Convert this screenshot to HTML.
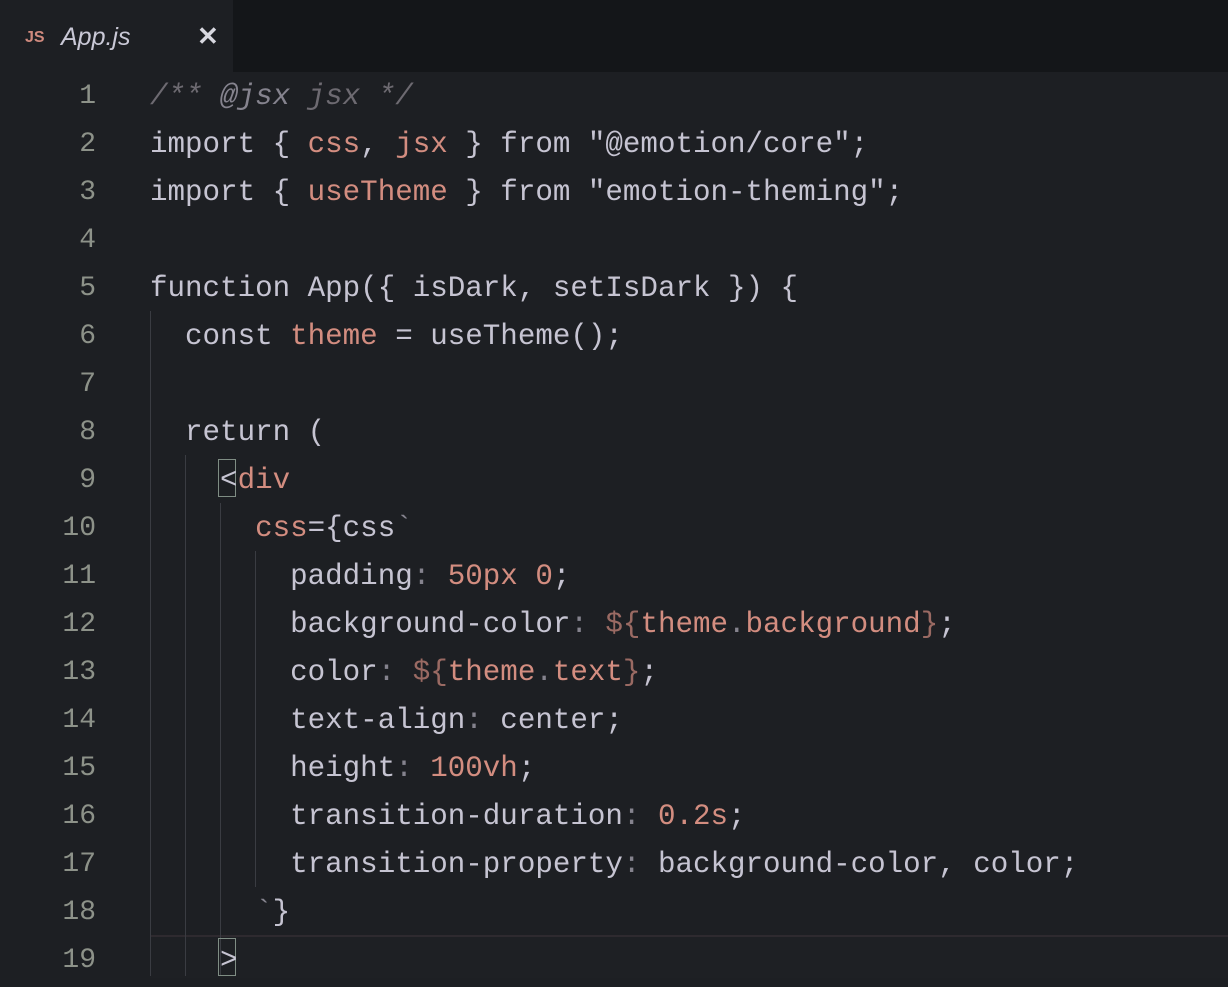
<!DOCTYPE html>
<html><head><style>
body{margin:0;width:1228px;height:976px;overflow:hidden;background:#1d1f23;font-family:"Liberation Mono",monospace;}
.bar{position:absolute;left:0;top:0;width:1228px;height:72px;background:#141619;}
.tab{position:absolute;left:0;top:0;width:233px;height:72px;background:#1d1f23;}
.tab .ic{position:absolute;left:25px;top:29px;font:bold 16px "Liberation Sans",sans-serif;color:#d08a7e;}
.tab .nm{position:absolute;left:61px;top:23px;font:italic 25px "Liberation Sans",sans-serif;color:#c9c8d6;}
.tab .x{position:absolute;left:197px;top:21px;font:bold 26px "Liberation Sans",sans-serif;color:#d8d8e0;}
.ln{position:absolute;left:0;width:96px;text-align:right;font-size:28px;color:#8d9289;height:48px;line-height:52px;}
.code{position:absolute;left:150px;font-size:29.2px;color:#c6c4d2;height:48px;line-height:52px;white-space:pre;}
.p{color:#d38d80}.d{color:#9a6a63}.c{color:#6d6a71;font-style:italic}.g{color:#85838e}.w{color:#c6c4d2}
.guide{position:absolute;width:0;border-left:1px solid #3a3c42;}
.box{position:absolute;border:1px solid #7f8d84;width:16px;height:36px;}
.cur{position:absolute;left:150px;top:935px;width:1078px;height:41px;border-top:2px solid #2e2a2f;background:#1e2024;}
</style></head><body>
<div class="bar"></div>
<div class="tab"><span class="ic">JS</span><span class="nm">App.js</span><span class="x">✕</span></div>
<div class="cur"></div>
<div class="guide" style="left:150px;top:311px;height:665px"></div>
<div class="guide" style="left:185px;top:455px;height:521px"></div>
<div class="guide" style="left:220px;top:503px;height:473px"></div>
<div class="guide" style="left:255px;top:551px;height:336px"></div>
<div class="box" style="left:218px;top:459px"></div>
<div class="box" style="left:218px;top:938px"></div>

<div class="ln" style="top:71px">1</div><div class="code" style="top:71px"><span class="c">/** </span><span class="g" style="font-style:italic">@jsx</span><span class="c"> jsx */</span></div>
<div class="ln" style="top:119px">2</div><div class="code" style="top:119px">import { <span class="p">css</span>, <span class="p">jsx</span> } from "@emotion/core";</div>
<div class="ln" style="top:167px">3</div><div class="code" style="top:167px">import { <span class="p">useTheme</span> } from "emotion-theming";</div>
<div class="ln" style="top:215px">4</div>
<div class="ln" style="top:263px">5</div><div class="code" style="top:263px">function App({ isDark, setIsDark }) {</div>
<div class="ln" style="top:311px">6</div><div class="code" style="top:311px">  const <span class="p">theme</span> = useTheme();</div>
<div class="ln" style="top:359px">7</div>
<div class="ln" style="top:407px">8</div><div class="code" style="top:407px">  return (</div>
<div class="ln" style="top:455px">9</div><div class="code" style="top:455px">    &lt;<span class="p">div</span></div>
<div class="ln" style="top:503px">10</div><div class="code" style="top:503px">      <span class="p">css</span>={css<span class="g">`</span></div>
<div class="ln" style="top:551px">11</div><div class="code" style="top:551px">        padding<span class="g">:</span> <span class="p">50px 0</span>;</div>
<div class="ln" style="top:599px">12</div><div class="code" style="top:599px">        background-color<span class="g">:</span> <span class="d">${</span><span class="p">theme</span><span class="g">.</span><span class="p">background</span><span class="d">}</span>;</div>
<div class="ln" style="top:647px">13</div><div class="code" style="top:647px">        color<span class="g">:</span> <span class="d">${</span><span class="p">theme</span><span class="g">.</span><span class="p">text</span><span class="d">}</span>;</div>
<div class="ln" style="top:695px">14</div><div class="code" style="top:695px">        text-align<span class="g">:</span> center;</div>
<div class="ln" style="top:743px">15</div><div class="code" style="top:743px">        height<span class="g">:</span> <span class="p">100vh</span>;</div>
<div class="ln" style="top:791px">16</div><div class="code" style="top:791px">        transition-duration<span class="g">:</span> <span class="p">0.2s</span>;</div>
<div class="ln" style="top:839px">17</div><div class="code" style="top:839px">        transition-property<span class="g">:</span> background-color, color;</div>
<div class="ln" style="top:887px">18</div><div class="code" style="top:887px">      <span class="g">`</span>}</div>
<div class="ln" style="top:935px">19</div><div class="code" style="top:935px">    &gt;</div>
</body></html>
